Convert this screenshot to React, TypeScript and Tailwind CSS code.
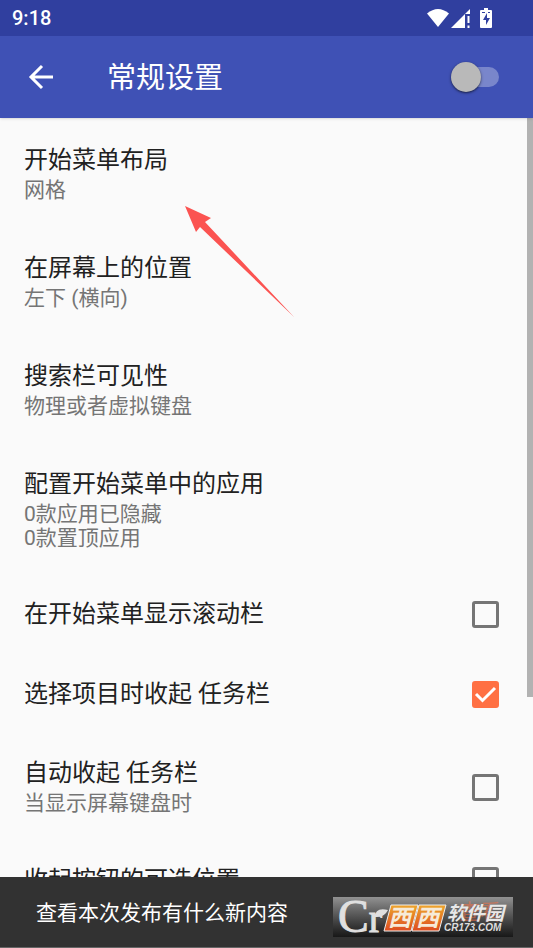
import React from 'react';

interface Setting {
  id: string;
  title: string;
  summary?: string[];
  checked?: boolean;
}

const settings: Setting[] = [
  { id: 'layout', title: '开始菜单布局', summary: ['网格'] },
  { id: 'position', title: '在屏幕上的位置', summary: ['左下 (横向)'] },
  { id: 'search', title: '搜索栏可见性', summary: ['物理或者虚拟键盘'] },
  { id: 'apps', title: '配置开始菜单中的应用', summary: ['0款应用已隐藏', '0款置顶应用'] },
  { id: 'scrollbar', title: '在开始菜单显示滚动栏', checked: false },
  { id: 'hide-taskbar', title: '选择项目时收起 任务栏', checked: true },
  { id: 'auto-hide', title: '自动收起 任务栏', summary: ['当显示屏幕键盘时'], checked: false },
  { id: 'collapse', title: '收起按钮的可选位置', checked: false },
];

function StatusBar() {
  return (
    <div className="flex h-9 items-center justify-between bg-[#303f9f] pl-3 pr-[41px]">
      <span className="text-xl font-medium">9:18</span>
      <div className="flex items-center">
        <svg viewBox="0 0 22 18" className="h-[18px] w-[22px]" fill="#fff" aria-hidden="true">
          <path d="M0 4.5Q11 -4.5 22 4.5L11 18Z" />
        </svg>
        <svg viewBox="0 0 19 19" className="ml-0.5 h-[19px] w-[19px]" fill="#fff" aria-hidden="true">
          <path d="M0 19L19 0V5H14V19Z" />
          <path d="M16.500 7h2v7h-2zM16.500 16.500h2v2.500h-2z" />
        </svg>
        <svg viewBox="0 0 12 20" className="ml-[10px] h-5 w-3" aria-hidden="true">
          <path d="M4 0h4v2h3q1 0 1 1v16q0 1-1 1H1q-1 0-1-1V3q0-1 1-1h3z" fill="#fff" />
          <path d="M7 5L3 12h3v5l4-7H7zM2 4h3v1H2zM8 4h2v1H8z" fill="#303f9f" />
        </svg>
      </div>
    </div>
  );
}

function SettingRow({ item }: { item: Setting }) {
  const text = (
    <>
      <span className="block text-2xl leading-7 text-[#212121]">{item.title}</span>
      {item.summary && (
        <span className="block pt-1 text-[21px] leading-6 text-[#757575]">
          {item.summary.map((line) => (
            <span key={line} className="block">{line}</span>
          ))}
        </span>
      )}
    </>
  );

  if (item.checked === undefined) {
    return (
      <li>
        <button type="button" className="block w-full px-6 pt-7 pb-6 text-left">{text}</button>
      </li>
    );
  }

  return (
    <li>
      <label htmlFor={item.id} className="flex min-h-20 items-center justify-between py-[25px] pl-6 pr-[34px]">
        <span>{text}</span>
        <span className="relative flex h-[27px] w-[27px] shrink-0">
          <input
            id={item.id}
            type="checkbox"
            defaultChecked={item.checked}
            className="peer h-full w-full appearance-none rounded-[3px] border-3 border-[#757575] checked:border-[#ff7043] checked:bg-[#ff7043]"
          />
          <svg viewBox="0 0 27 27" className="pointer-events-none absolute inset-0 hidden peer-checked:block" fill="none" stroke="#fff" strokeWidth="3" aria-hidden="true">
            <path d="M4 13L10.500 19.500L23 7" />
          </svg>
        </span>
      </label>
    </li>
  );
}

function LogoMark() {
  return (
    <svg viewBox="0 0 180 40" className="pointer-events-none absolute right-5 bottom-[10px] h-10 w-[180px] overflow-visible" aria-hidden="true">
      <defs>
        <linearGradient id="tile" x1="0" y1="0" x2="0" y2="1">
          <stop offset="0" stopColor="#eda52c" />
          <stop offset="1" stopColor="#dd4c20" />
        </linearGradient>
      </defs>
      <text x="5" y="35" fontSize="46" fontFamily="Liberation Serif, serif" fill="#e0e0e0" stroke="#e0e0e0" strokeWidth="1">
        C<tspan fontSize="40">r</tspan>
      </text>
      <path d="M42 20Q42 10 55 13Q51 21 42 20Z" fill="#e0e0e0" />
      <g stroke="#eee" strokeWidth="1" fill="url(#tile)">
        <path d="M58 8H85L78 34H51Z" />
        <path d="M86 8H113L106 34H79Z" />
      </g>
      <g fontSize="23" fontWeight="700" fontStyle="italic" fontFamily="Noto Sans CJK SC, sans-serif" fill="#f6ead8">
        <text x="55" y="29">西</text>
        <text x="83" y="29">西</text>
      </g>
      <text x="114" y="23" fontSize="19" fontWeight="700" fontStyle="italic" fontFamily="Noto Sans CJK SC, sans-serif" fill="#e8e8e8">软件园</text>
      <text x="111" y="34" fontSize="10" fontWeight="700" fontStyle="italic" fontFamily="Liberation Sans, sans-serif" fill="#ddd">CR173.COM</text>
    </svg>
  );
}

export default function App() {
  return (
    <div className="relative flex h-screen flex-col overflow-hidden bg-[#fafafa] font-[Roboto,'Noto_Sans_CJK_SC',sans-serif]">
      <header className="relative z-10 text-white shadow-sm">
        <StatusBar />
        <div className="flex h-[82px] items-center bg-[#3f51b5] pl-7 pr-[34px]">
          <button type="button" aria-label="返回" className="w-[79px]">
            <svg viewBox="0 0 26 26" className="h-[26px] w-[26px]" fill="none" stroke="#fff" strokeWidth="3" aria-hidden="true">
              <path d="M25 13H4M14 2L3 13L14 24" />
            </svg>
          </button>
          <h1 className="flex-1 pt-0.5 text-[29px] leading-9">常规设置</h1>
          <label className="relative flex h-[30px] w-12 items-center justify-end">
            <input type="checkbox" role="switch" aria-label="常规设置" className="peer absolute inset-0 z-10 opacity-0" />
            <span className="h-5 w-9 rounded-full bg-[#7986cb]" />
            <span className="absolute top-0 left-0 h-[30px] w-[30px] rounded-full bg-[#b9b9b9] shadow-sm shadow-black/50 peer-checked:translate-x-4" />
          </label>
        </div>
      </header>

      <main className="relative min-h-0 flex-1 overflow-hidden">
        <ul>
          {settings.map((item) => (
            <SettingRow key={item.id} item={item} />
          ))}
        </ul>
        <div className="absolute top-0 right-0 h-[579px] w-[6px] bg-[#b2b2b2]" />
        <svg viewBox="0 0 110 112" className="pointer-events-none absolute top-[88px] left-[185px] h-[112px] w-[110px]" fill="#fb5351" aria-hidden="true">
          <path d="M0 0L26 12L20 16L109 111L15 21L11 26Z" />
        </svg>
      </main>

      <div className="relative flex h-[71px] items-center justify-between border-b border-[#666] bg-[#323232] pl-9 pr-8 text-[21px] leading-6 text-white">
        <p className="pt-0.5">查看本次发布有什么新内容</p>
        <div className="absolute right-5 bottom-[10px] h-10 w-[180px] bg-linear-to-b from-[#929292] to-[#181818]" />
        <button type="button" className="relative text-[#ff7043]/50">查看</button>
        <LogoMark />
      </div>
    </div>
  );
}
